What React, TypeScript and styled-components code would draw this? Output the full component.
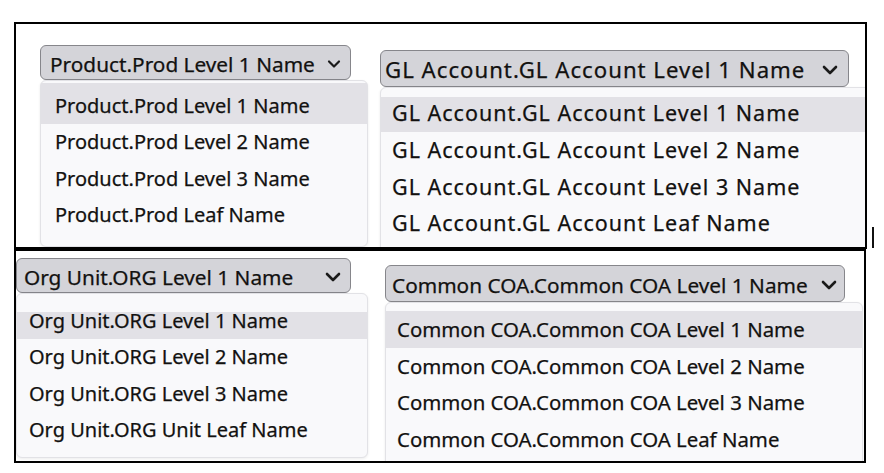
import styled, { createGlobalStyle } from 'styled-components';
import { ChevronDown } from 'lucide-react';

const GlobalStyle = createGlobalStyle`
  body {
    margin: 0;
    background: #ffffff;
    font-family: 'Noto Sans', 'Open Sans', sans-serif;
    color: #121110;
  }
`;

const Board = styled.div`
  position: relative;
  width: 853px;
  margin: 22px 0 0 14px;
  display: flex;
  flex-direction: column;
`;

const Frame = styled.section<{ $w: number; $h: number }>`
  box-sizing: border-box;
  width: ${({ $w }) => $w}px;
  height: ${({ $h }) => $h}px;
  border: 2px solid #000;
  overflow: hidden;
  display: flex;
  align-items: flex-start;
`;

// stray ruler tick to the right of the upper frame
const Tick = styled.span`
  position: absolute;
  left: 858px;
  top: 205px;
  width: 2px;
  height: 21px;
  background: #111;
`;

const Column = styled.div<{ $left: number; $top: number; $fs: number; $ls: number }>`
  flex: none;
  display: flex;
  flex-direction: column;
  margin-left: ${({ $left }) => $left}px;
  margin-top: ${({ $top }) => $top}px;
  font-size: ${({ $fs }) => $fs}px;
  letter-spacing: ${({ $ls }) => $ls}px;
  -webkit-text-stroke: 0.25px currentColor;
`;

const Trigger = styled.button<{ $w: number; $h: number; $pl: number; $pr: number; $fs: number }>`
  box-sizing: border-box;
  width: ${({ $w }) => $w}px;
  height: ${({ $h }) => $h}px;
  padding: 2px ${({ $pr }) => $pr}px 0 ${({ $pl }) => $pl}px;
  display: flex;
  align-items: center;
  justify-content: space-between;
  background: #d4d4d9;
  border: 1px solid #86868b;
  border-radius: 6px;
  font-family: inherit;
  font-size: ${({ $fs }) => $fs}px;
  letter-spacing: inherit;
  color: #121110;
  white-space: nowrap;
  cursor: pointer;

  svg {
    flex: none;
    color: #1a1a1a;
  }
`;

const Panel = styled.ul<{ $w: number; $h: number; $pt: number }>`
  box-sizing: border-box;
  list-style: none;
  margin: 0;
  width: ${({ $w }) => $w}px;
  height: ${({ $h }) => $h}px;
  padding: ${({ $pt }) => $pt}px 0 0;
  background: #f9f9fb;
  border: 1px solid #e2e2e6;
  border-radius: 6px;
  box-shadow: 0 1px 3px rgba(0, 0, 0, 0.08);
`;

const Option = styled.li<{ $px: number; $line: number; $pt: number; $pb: number; $selected: boolean }>`
  padding: ${({ $pt }) => $pt}px ${({ $px }) => $px}px ${({ $pb }) => $pb}px;
  line-height: ${({ $line }) => $line}px;
  white-space: nowrap;
  background: ${({ $selected }) => ($selected ? '#e2e1e6' : 'transparent')};
`;

interface DropdownSpec {
  left: number;
  top: number;
  fontSize: number;
  buttonFontSize: number;
  letterSpacing: number;
  buttonWidth: number;
  buttonHeight: number;
  buttonPadLeft: number;
  buttonPadRight: number;
  chevron: number;
  panelWidth: number;
  panelHeight: number;
  panelPadTop: number;
  itemPadX: number;
  rowLine: number;
  selLine: number;
  selPadTop: number;
  selPadBottom: number;
  items: string[];
}

const Dropdown = ({ spec }: { spec: DropdownSpec }) => (
  <Column $left={spec.left} $top={spec.top} $fs={spec.fontSize} $ls={spec.letterSpacing}>
    <Trigger
      type="button"
      $w={spec.buttonWidth}
      $h={spec.buttonHeight}
      $pl={spec.buttonPadLeft}
      $pr={spec.buttonPadRight}
      $fs={spec.buttonFontSize}
    >
      <span>{spec.items[0]}</span>
      <ChevronDown size={spec.chevron} strokeWidth={2.6} />
    </Trigger>
    <Panel $w={spec.panelWidth} $h={spec.panelHeight} $pt={spec.panelPadTop}>
      {spec.items.map((item, i) => (
        <Option
          key={item}
          $px={spec.itemPadX}
          $line={i === 0 ? spec.selLine : spec.rowLine}
          $pt={i === 0 ? spec.selPadTop : 0}
          $pb={i === 0 ? spec.selPadBottom : 0}
          $selected={i === 0}
        >
          {item}
        </Option>
      ))}
    </Panel>
  </Column>
);

const product: DropdownSpec = {
  left: 24,
  top: 21,
  fontSize: 20,
  buttonFontSize: 20.8,
  letterSpacing: 0,
  buttonWidth: 311,
  buttonHeight: 35,
  buttonPadLeft: 9,
  buttonPadRight: 6,
  chevron: 20,
  panelWidth: 328,
  panelHeight: 167,
  panelPadTop: 2,
  itemPadX: 14,
  rowLine: 36.3,
  selLine: 36.3,
  selPadTop: 5,
  selPadBottom: 0,
  items: [
    'Product.Prod Level 1 Name',
    'Product.Prod Level 2 Name',
    'Product.Prod Level 3 Name',
    'Product.Prod Leaf Name',
  ],
};

const glAccount: DropdownSpec = {
  left: 12,
  top: 26,
  fontSize: 21.5,
  buttonFontSize: 22.2,
  letterSpacing: 1,
  buttonWidth: 469,
  buttonHeight: 37,
  buttonPadLeft: 4,
  buttonPadRight: 6,
  chevron: 24,
  panelWidth: 500,
  panelHeight: 300,
  panelPadTop: 9,
  itemPadX: 11,
  rowLine: 36.6,
  selLine: 32,
  selPadTop: 0,
  selPadBottom: 3,
  items: [
    'GL Account.GL Account Level 1 Name',
    'GL Account.GL Account Level 2 Name',
    'GL Account.GL Account Level 3 Name',
    'GL Account.GL Account Leaf Name',
  ],
};

const orgUnit: DropdownSpec = {
  left: 0,
  top: 7,
  fontSize: 20,
  buttonFontSize: 20.8,
  letterSpacing: 0,
  buttonWidth: 335,
  buttonHeight: 35,
  buttonPadLeft: 7,
  buttonPadRight: 5,
  chevron: 24,
  panelWidth: 352,
  panelHeight: 165,
  panelPadTop: 18,
  itemPadX: 12,
  rowLine: 36.7,
  selLine: 17,
  selPadTop: 0,
  selPadBottom: 10,
  items: [
    'Org Unit.ORG Level 1 Name',
    'Org Unit.ORG Level 2 Name',
    'Org Unit.ORG Level 3 Name',
    'Org Unit.ORG Unit Leaf Name',
  ],
};

const commonCoa: DropdownSpec = {
  left: 17,
  top: 14,
  fontSize: 20.4,
  buttonFontSize: 20.8,
  letterSpacing: 0,
  buttonWidth: 460,
  buttonHeight: 37,
  buttonPadLeft: 6,
  buttonPadRight: 3,
  chevron: 24,
  panelWidth: 478,
  panelHeight: 300,
  panelPadTop: 8,
  itemPadX: 11,
  rowLine: 36.7,
  selLine: 36.7,
  selPadTop: 0,
  selPadBottom: 0,
  items: [
    'Common COA.Common COA Level 1 Name',
    'Common COA.Common COA Level 2 Name',
    'Common COA.Common COA Level 3 Name',
    'Common COA.Common COA Leaf Name',
  ],
};

export default function App() {
  return (
    <>
      <GlobalStyle />
      <Board>
        <Frame $w={853} $h={227}>
          <Dropdown spec={product} />
          <Dropdown spec={glAccount} />
        </Frame>
        <Frame $w={852} $h={214}>
          <Dropdown spec={orgUnit} />
          <Dropdown spec={commonCoa} />
        </Frame>
        <Tick />
      </Board>
    </>
  );
}
